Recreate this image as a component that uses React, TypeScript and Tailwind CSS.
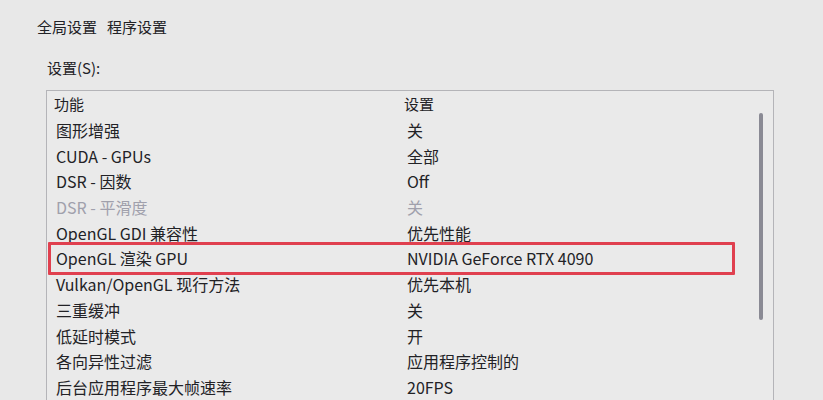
import React from 'react';

const rows: { name: string; value: string; muted?: boolean; marked?: boolean }[] = [
  { name: '图形增强', value: '关' },
  { name: 'CUDA - GPUs', value: '全部' },
  { name: 'DSR - 因数', value: 'Off' },
  { name: 'DSR - 平滑度', value: '关', muted: true },
  { name: 'OpenGL GDI 兼容性', value: '优先性能' },
  { name: 'OpenGL 渲染 GPU', value: 'NVIDIA GeForce RTX 4090', marked: true },
  { name: 'Vulkan/OpenGL 现行方法', value: '优先本机' },
  { name: '三重缓冲', value: '关' },
  { name: '低延时模式', value: '开' },
  { name: '各向异性过滤', value: '应用程序控制的' },
  { name: '后台应用程序最大帧速率', value: '20FPS' },
];

const App = () => {
  return (
    <div
      className="w-[823px] h-[400px] overflow-hidden bg-[#e8e8e8] text-[#222226] pl-[37px] pt-[17px] flex flex-col"
      style={{ fontFamily: '"Noto Sans CJK SC", "Noto Sans", sans-serif' }}
    >
      <div className="flex gap-[10px] text-[15px] leading-[20px]">
        <span>全局设置</span>
        <span>程序设置</span>
      </div>
      <div className="ml-[10px] mt-[21px] text-[15px] leading-[20px]">设置(S):</div>
      <div className="ml-[9px] mt-[12px] w-[728px] border border-[#b4b4b8] bg-[#eaeaea] relative flex-1">
        <div className="grid grid-cols-[350px_1fr] h-[26px] items-center text-[15px] pl-[7px]">
          <span>功能</span>
          <span>设置</span>
        </div>
        {rows.map((r) => (
          <div
            key={r.name}
            className={`relative grid grid-cols-[350px_1fr] h-[25.73px] items-center text-[16px] pl-[9px] ${
              r.muted ? 'text-[#a0a0ac]' : ''
            }`}
          >
            <span className="whitespace-nowrap">{r.name}</span>
            <span className="whitespace-nowrap pl-[1px]">{r.value}</span>
            {r.marked && (
              <span className="absolute left-[1px] w-[687px] top-[-4px] bottom-[-4px] border-[3.5px] border-[#e0404f] rounded-[1px]" />
            )}
          </div>
        ))}
        <div className="absolute left-[712px] top-[22px] w-[4px] h-[207px] rounded-full bg-[#8a8a94]" />
      </div>
    </div>
  );
};

export default App;
